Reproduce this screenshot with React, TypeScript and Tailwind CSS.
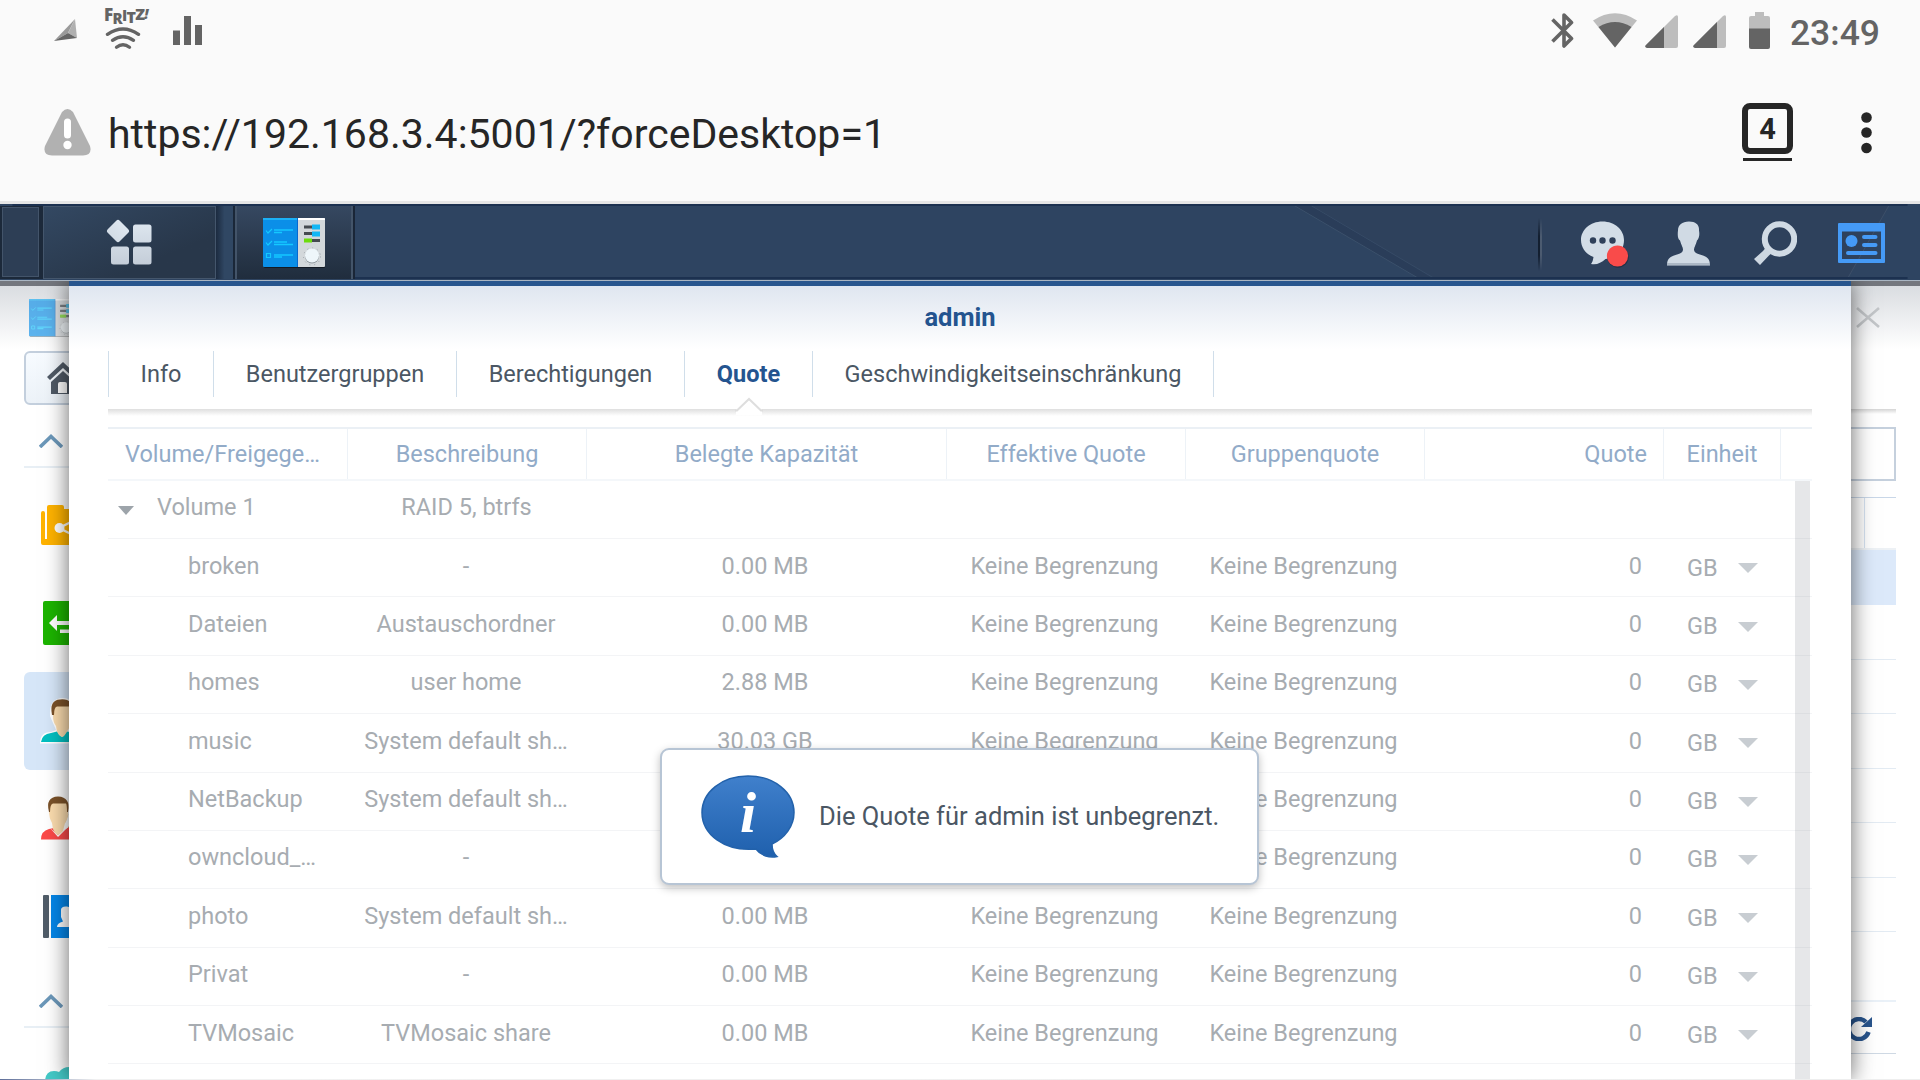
import { ReactNode } from "react";

interface ShareRow {
  name: string;
  description: string;
  used: string;
}

const shares: ShareRow[] = [
  { name: "broken", description: "-", used: "0.00 MB" },
  { name: "Dateien", description: "Austauschordner", used: "0.00 MB" },
  { name: "homes", description: "user home", used: "2.88 MB" },
  { name: "music", description: "System default sh…", used: "30.03 GB" },
  { name: "NetBackup", description: "System default sh…", used: "0.00 MB" },
  { name: "owncloud_…", description: "-", used: "0.00 MB" },
  { name: "photo", description: "System default sh…", used: "0.00 MB" },
  { name: "Privat", description: "-", used: "0.00 MB" },
  { name: "TVMosaic", description: "TVMosaic share", used: "0.00 MB" },
];

const tabs = [
  { label: "Info", width: "w-[105px]" },
  { label: "Benutzergruppen", width: "w-[243px]" },
  { label: "Berechtigungen", width: "w-[228px]" },
  { label: "Quote", width: "w-[128px]", active: true },
  { label: "Geschwindigkeitseinschränkung", width: "w-[401px]" },
];

const columns = "grid grid-cols-[240px_239px_360px_239px_239px_239px_117px_1fr]";

function StatusBar() {
  return (
    <div className="flex h-[64px] items-start justify-between">
      <div className="flex">
        <svg className="ml-[54px] mt-[18px] h-[24px] w-[24px]" viewBox="0 0 24 24">
          <path d="M0 23 21 1 14 15Z" fill="#9a9a9a" />
          <path d="M21 1 23 20 14 15Z" fill="#b0b0b0" />
          <path d="M0 23 14 15 23 20Z" fill="#666" />
        </svg>
        <div className="ml-[26px] mt-[6px] w-[46px]">
          <div className="flex h-[18px] items-start font-['Open_Sans',sans-serif] text-[17px] font-extrabold leading-[18px] tracking-[-0.7px] text-[#646464]">
            <span>F</span>
            <span className="text-[15px] leading-[24px]">R</span>
            <span className="text-[15px]">I</span>
            <span className="text-[16px] leading-[22px]">T</span>
            <span className="text-[16px] leading-[17px]">Z</span>
            <span className="text-[14px] italic leading-[16px]">!</span>
          </div>
          <svg className="ml-[0.5px] mt-[3px] h-[24px] w-[36px]" viewBox="0 0 36 24" fill="none" stroke="#646464" strokeWidth="3.4" strokeLinecap="round">
            <path d="M2.500 7.300Q18 -3.200 33.500 7.300" />
            <path d="M7.500 13.300Q18 6 28.500 13.300" />
            <path d="M11.500 20.300Q18 15 24.500 20.300" />
          </svg>
        </div>
        <svg className="ml-[23px] mt-[16px] h-[29px] w-[30px]" viewBox="0 0 30 29" fill="#646464">
          <path d="M0 14.500h7V29H0zM11 0h7v29h-7zM22 9h7v20h-7z" />
        </svg>
      </div>
      <div className="flex pr-[40px]">
        <svg className="mt-[13px] h-[35px] w-[23px]" viewBox="0 0 23 35" fill="none" stroke="#646464" strokeWidth="3.6" strokeLinejoin="round">
          <path d="M1.500 6.500 20.500 25.500 13 33V2L20.500 9.500 1.500 28.500" />
        </svg>
        <svg className="ml-[19px] mt-[13px] h-[35px] w-[44px]" viewBox="0 0 44 35">
          <path d="M0 7.500Q22-7 44 7.500L22 34.500Z" fill="#bdbdbd" />
          <path d="M5.500 14Q22 4 38.500 14L22 34.500Z" fill="#646464" />
        </svg>
        <svg className="ml-[8px] mt-[15px] h-[33px] w-[33px]" viewBox="0 0 33 33">
          <path d="M1 30 30 1Q33-1 33 2V31Q33 33 31 33H2Q-1 32 1 30Z" fill="#bdbdbd" />
          <path d="M1 30 19 12V33H2Q-1 32 1 30Z" fill="#646464" />
        </svg>
        <svg className="ml-[15px] mt-[15px] h-[33px] w-[33px]" viewBox="0 0 33 33">
          <path d="M1 30 30 1Q33-1 33 2V31Q33 33 31 33H2Q-1 32 1 30Z" fill="#bdbdbd" />
          <path d="M1 30 24 7V33H2Q-1 32 1 30Z" fill="#646464" />
        </svg>
        <svg className="ml-[23px] mt-[12px] h-[37px] w-[21px]" viewBox="0 0 21 37">
          <path d="M6 0h9v4h4q2 0 2 2v11H0V6q0-2 2-2h4z" fill="#bdbdbd" />
          <path d="M0 16.500h21V35q0 2-2 2H2q-2 0-2-2z" fill="#646464" />
        </svg>
        <span className="ml-[20px] mt-[12px] text-[35.5px] font-medium leading-[42px] text-[#646464]">23:49</span>
      </div>
    </div>
  );
}

function AddressBar() {
  return (
    <div className="flex h-[137px] items-start justify-between">
      <div className="flex">
        <svg className="ml-[44px] mt-[45px] h-[47px] w-[47px]" viewBox="0 0 47 47">
          <path d="M18 3Q23.500-3 29 3L46 37Q48.500 46 39 46.500H8Q-1.500 46 1 37Z" fill="#b1b1b1" />
          <rect x="20" y="9.500" width="7" height="20" rx="3.500" fill="#fff" />
          <circle cx="23.500" cy="36" r="4.200" fill="#fff" />
        </svg>
        <span className="ml-[17px] mt-[46px] text-[41px] leading-[48px] text-[#262626]">https://192.168.3.4:5001/?forceDesktop=1</span>
      </div>
      <div className="flex pr-[48px]">
        <div className="mt-[39px] flex flex-col items-center gap-[4px]">
          <div className="flex h-[51px] w-[51px] items-center justify-center rounded-[8px] border-[6px] border-[#262626] pt-[3px] text-[29px] font-bold text-[#262626]">4</div>
          <div className="h-[3px] w-[49px] bg-[#262626]" />
        </div>
        <svg className="ml-[68px] mt-[48px] h-[42px] w-[11px]" viewBox="0 0 11 42" fill="#262626">
          <circle cx="5.500" cy="5.500" r="5.300" />
          <circle cx="5.500" cy="20.500" r="5.300" />
          <circle cx="5.500" cy="36" r="5.300" />
        </svg>
      </div>
    </div>
  );
}

function ControlPanelIcon({ className }: { className: string }) {
  return (
    <svg className={className} viewBox="0 0 62 50">
      <rect x="1" y="2" width="61" height="48" rx="1" fill="#000" opacity=".45" />
      <path d="M0 1q0-1 1-1h34v49H1q-1 0-1-1z" fill="#0b8fe8" />
      <path d="M0 0h35v2H0z" fill="#1bb0f5" />
      <path d="M34 0h1v49h-1z" fill="#0868cf" />
      <path d="M35 0h26q1 0 1 1v47q0 1-1 1H35z" fill="#d3d8db" />
      <path d="M35 0h26q1 0 1 1v1H35z" fill="#fff" />
      <path d="M3 12.500l2 2.500 4-4M3 24.500l2 2.500 4-4M3.500 35.500h4v4h-4z" fill="none" stroke="#14c8ff" strokeWidth="1.200" />
      <path d="M11 12h19M11 14.500h8M11 24h13M11 26.500h19M11 37h19M11 39h8" stroke="#14c8ff" strokeWidth="1.500" />
      <path d="M41 9h16M41 15.500h16M41 22.500h16" stroke="#454b50" strokeWidth="3" />
      <path d="M49 6.500h8v5h-8zM49 13.500h8v5h-8z" fill="#12b7f5" />
      <path d="M41 20.500h8v4h-8z" fill="#6cdc0c" />
      <circle cx="49" cy="38.500" r="8.500" fill="none" stroke="#9aa3aa" strokeWidth="1" strokeDasharray="1 4" />
      <circle cx="49" cy="38.500" r="7" fill="#8f989e" />
      <circle cx="49" cy="37.500" r="7" fill="#eef6fa" />
    </svg>
  );
}

function Taskbar() {
  return (
    <div className="relative flex h-[77px] justify-between overflow-hidden border-b border-b-[#a9b5c2] bg-[#2e4461]">
      <svg className="absolute inset-0 h-full w-full" viewBox="0 0 1920 77">
        <path d="M1296 0H1313L1440 75H1424Z" fill="#2a3d59" />
        <path d="M1296 0 1424 75" stroke="#3b506b" />
        <path d="M1313 0H1902L1859 76H1440Z" fill="#2e415c" />
        <path d="M1313 0 1440 75" stroke="#364a66" />
        <path d="M1902 0 1859 76" stroke="#3d4f69" />
        <path d="M0 1H1920M0 75H1920" stroke="#1c3150" strokeWidth="2" />
      </svg>
      <div className="relative flex pt-[2px] pb-[1px]">
        <div className="w-[43px] border-2 border-t border-r-[4px] border-[#1c293a] bg-[#2d3e55] shadow-[inset_0_0_0_1px_#43546a]" />
        <div className="flex w-[173px] items-center justify-center border border-[#44566c] bg-linear-to-br from-[#334862] to-[#28374a] to-70%">
          <svg className="-mt-[1px] -ml-[1px] h-[46px] w-[46px]" viewBox="0 0 46 46">
            <defs>
              <linearGradient id="tile" x1="0" y1="0" x2="0" y2="46" gradientUnits="userSpaceOnUse">
                <stop stopColor="#dfe8f1" />
                <stop offset="1" stopColor="#c4cdd8" />
              </linearGradient>
            </defs>
            <g fill="url(#tile)">
              <rect x="3.500" y="3.500" width="17" height="17" rx="2.500" transform="rotate(45 12 12)" />
              <rect x="27" y="5.500" width="18.500" height="18" rx="2.500" />
              <rect x="5" y="27.500" width="18" height="18" rx="2.500" />
              <rect x="27" y="27.500" width="18.500" height="18" rx="2.500" />
            </g>
          </svg>
        </div>
        <div className="w-[19px] border-r-2 border-[#1a2738] bg-linear-to-r from-[#1c2b40] to-[#304763] to-50%" />
        <div className="flex w-[118px] items-center justify-center border-x-2 border-[#435469] bg-linear-to-b from-[#364861] to-[#202d3d]">
          <ControlPanelIcon className="h-[50px] w-[62px]" />
        </div>
        <div className="w-[2px] bg-[#1a2637]" />
      </div>
      <div className="relative flex pr-[35px]">
        <div className="mt-[14px] h-[53px] w-[4px] border-r-2 border-[#4c5b70] bg-[#131f30] [mask-image:linear-gradient(transparent,black_35%,black_70%,transparent)]" />
        <svg className="ml-[39px] mt-[17px] h-[48px] w-[48px]" viewBox="0 0 48 48">
          <path d="M21.500.500C9 .500 0 9 0 19c0 8 5 14 12.500 17-.5 3-1 5-2.500 7 6 1 10-1 14.500-5C36 37 43 29 43 19 43 9 34 .500 21.500.500Z" fill="#d3dde7" />
          <g fill="#2f405a">
            <circle cx="12" cy="19.500" r="3.200" />
            <circle cx="21.500" cy="19.500" r="3.200" />
            <circle cx="31.500" cy="19.500" r="3.200" />
          </g>
          <circle cx="37" cy="36" r="10.700" fill="#203047" />
          <circle cx="36.500" cy="35" r="10.600" fill="#f94b4a" />
        </svg>
        <svg className="ml-[38px] mt-[17px] h-[45px] w-[43px]" viewBox="0 0 43 45">
          <path d="M22 .500c7 0 10.500 3.500 10 9 .8 4 .2 8-2 10-1 4-3 7-3 9 0 4 5 4.500 9 6 5 2 7 4 7 10H0c0-6 2-8 7-10 4-1.500 9-2 9-6 0-2-2-5-3-9-2.500-2-2.500-6-2-10C11 4 15 .500 22 .500Z" fill="#d0dae4" />
          <path d="M0 43h43" stroke="#8795a6" />
        </svg>
        <svg className="ml-[44px] mt-[17px] h-[45px] w-[43px]" viewBox="0 0 43 45">
          <circle cx="25.500" cy="18" r="14.700" fill="none" stroke="#d0dae4" strokeWidth="6" />
          <path d="M11.500 27 17 32.500 14.500 35 6 44 0 38 9 30Z" fill="#cdd7e1" />
        </svg>
        <svg className="ml-[41px] mt-[19px] h-[40px] w-[47px]" viewBox="0 0 47 40">
          <path fillRule="evenodd" d="M1 0h45q1 0 1 1v38q0 1-1 1H1q-1 0-1-1V1q0-1 1-1ZM4 8.500V36H43V8.500Z" fill="#459af6" />
          <circle cx="13.500" cy="18" r="6" fill="#459af6" />
          <path d="M26 14h11.500M26 22h11.500M10 30h27.500" stroke="#459af6" strokeWidth="4" strokeLinecap="round" />
        </svg>
      </div>
    </div>
  );
}

function Chevron() {
  return (
    <svg className="ml-[14.5px] h-[14px] w-[24px]" viewBox="0 0 24 14" fill="none" stroke="#6b97b9" strokeWidth="3.600">
      <path d="M1 13 12 2.500 23 13" />
    </svg>
  );
}

function SidebarItem({ children, selected }: { children: ReactNode; selected?: boolean }) {
  return (
    <div className={`flex h-[98px] items-center rounded-l-[6px] pl-[15px] ${selected ? "bg-[#d6e6f8]" : ""}`}>
      {children}
    </div>
  );
}

// Control panel window that sits behind the user dialog
function ControlPanelWindow() {
  return (
    <div className="flex h-full justify-between border-t-[5px] border-[#74777e] bg-linear-to-b from-[#dadde1] to-white to-[63px]">
      <div className="flex w-[100px] flex-col pl-[24px]">
        <ControlPanelIcon className="mt-[13px] ml-[5px] h-[38px] w-[47px] shrink-0 opacity-65" />
        <div className="mt-[14px] flex h-[54px] w-[90px] shrink-0 rounded-[6px] border-2 border-[#c3cfdd] bg-linear-to-b from-[#f7fbff] to-[#ecf2f8]">
          <svg className="ml-[21px] mt-[9px] h-[32px] w-[32px]" viewBox="0 0 32 32" fill="#505a66">
            <path d="M16 0 32 15 29 18 16 6 3 18 0 15Z" />
            <path d="M16 9 28 20V32H4V20Z" />
            <path d="M11 22q0-2 2-2h5q2 0 2 2v9h-9Z" fill="#fff" />
          </svg>
        </div>
        <div className="mt-[29px] h-[34px] shrink-0 border-b-2 border-[#e8eff5]">
          <Chevron />
        </div>
        <div className="mt-[8px] shrink-0">
          <SidebarItem>
            <svg className="ml-[2px] h-[40px] w-[44px]" viewBox="0 0 44 40">
              <path d="M6 2q0-2 2-2h13q2 0 2 2v2h21v36H2q-2 0-2-2V8q0-2 2-2 2 0 2 2v26h2Z" fill="#ffb300" />
              <path d="M18 23 34 15M18 23 34 31" stroke="#fff" strokeWidth="2.500" />
              <circle cx="18.500" cy="23" r="5" fill="#fff" />
            </svg>
          </SidebarItem>
          <SidebarItem>
            <svg className="ml-[4px] h-[44px] w-[44px]" viewBox="0 0 44 44">
              <rect width="44" height="44" rx="2" fill="#1cb400" />
              <path d="M6 22 14 14V20H30V24H14V30Z" fill="#fff" />
              <path d="M17 28.500H34V32H17Z" fill="#fff" />
            </svg>
          </SidebarItem>
          <SidebarItem selected>
            <svg className="ml-[0px] h-[46px] w-[48px]" viewBox="0 0 48 46">
              <path d="M1 45.500Q1 34 12 34L17 32 11 18Q10 0 24 0Q36 0 36 16L31 32 37 34Q47 35 47 45.500Z" fill="#fff" />
              <path d="M2 44Q3 36 12 35L18 33.500 23 39 28 33.500 35 35Q45 36 46 44Z" fill="#02bfc0" />
              <path d="M14 8H33V20Q31 30 28 33.500 25 39 23 39 20 38 18 33.500L17 28Q14 24 14 18Z" fill="#fbdcae" />
              <path d="M13 17Q10 2 21 1.500 34 0 34 14L32 19Q32 10 30 8.500H18Q15 9 15 17Z" fill="#7b5229" />
            </svg>
          </SidebarItem>
          <SidebarItem>
            <svg className="ml-[2px] mt-[-3px] h-[44px] w-[44px]" viewBox="0 0 44 44">
              <circle cx="32" cy="25" r="8" fill="#eac083" />
              <path d="M0 43.500Q0 35 8 33L13 32 23 34 28 31 38 34Q43 36 43 43.500Z" fill="#fb4a49" />
              <path d="M9 32 17 41 28 30 28 17 23 30 17 39Z" fill="#fff" />
              <path d="M8 7H27V17Q27 23 24 27L22 35Q18 39 17 39 14 38 12 33L11 27Q8 22 8 15Z" fill="#fbdcae" />
              <path d="M8 16Q4 1 17 .500 30 1 27 16H26Q26 9 25 7.500H12Q9 8 9 16Z" fill="#7b5229" />
            </svg>
          </SidebarItem>
          <SidebarItem>
            <svg className="ml-[4px] mt-[-1px] h-[43px] w-[44px]" viewBox="0 0 44 43">
              <rect width="6" height="43" rx="1" fill="#505c68" />
              <path d="M8 0H44V43H8Z" fill="#0586e8" />
              <path d="M18 15Q18 11 24 11.500 30 12 29 19L27 25 34 28V32H14Q14 28 20 26.500L18 22Z" fill="#fff" />
            </svg>
          </SidebarItem>
        </div>
        <div className="mt-[28px] h-[34px] shrink-0 border-b-2 border-[#e8eff5]">
          <Chevron />
        </div>
        <svg className="ml-[21px] mt-[39px] h-[13px] w-[40px] shrink-0" viewBox="0 0 40 13">
          <path d="M0 13Q1 4 9 4Q12 4 14 5Q18 0 24 0V13Z" fill="#44c9c7" />
        </svg>
      </div>
      <div className="flex w-[100px] flex-col pr-[24px]">
        <svg className="ml-[36px] mt-[21px] h-[21px] w-[24px] shrink-0" viewBox="0 0 24 21" stroke="#c2c5c8" strokeWidth="2.600">
          <path d="M1 1 23 20M23 1 1 20" />
        </svg>
        <div className="mt-[81px] h-[5px] shrink-0 bg-linear-to-b from-[#d5d5d5] to-white" />
        <div className="mt-[13px] h-[54px] shrink-0 border-2 border-[#c5d0dd] bg-white" />
        <div className="mt-[16px] h-[53px] shrink-0 border-t border-b-2 border-t-[#c9d7e8] border-b-[#edf1f5]">
          <div className="ml-[44px] h-full w-px bg-[#d5e2f1]" />
        </div>
        <div className="h-[55px] shrink-0 bg-[#dce9fa]" />
        <div className="h-[55px] shrink-0 border-b border-[#e3ebf3]" />
        <div className="h-[54px] shrink-0 border-b border-[#e3ebf3]" />
        <div className="h-[55px] shrink-0 border-b border-[#e3ebf3]" />
        <div className="h-[54px] shrink-0 border-b border-[#e3ebf3]" />
        <div className="h-[55px] shrink-0 border-b border-[#e3ebf3]" />
        <div className="h-[54px] shrink-0 border-b border-[#e3ebf3]" />
        <div className="h-[70px] shrink-0 border-b-2 border-[#eaf1f8]" />
        <div className="flex h-[52px] shrink-0 items-center border-b border-[#cfd9e4] pt-[3px]">
          <svg className="ml-[26px] h-[24px] w-[26px]" viewBox="0 0 26 24">
            <path d="M22.500 15A10 10 0 1 1 20 5" fill="none" stroke="#28548c" strokeWidth="4.500" />
            <path d="M26 0V10H15Z" fill="#28548c" />
          </svg>
        </div>
      </div>
    </div>
  );
}

function TabBar() {
  return (
    <div className="flex h-[46px] w-fit border-l border-[#d0deea]">
      {tabs.map((tab) => (
        <div
          key={tab.label}
          className={`relative flex shrink-0 items-center justify-center border-r border-[#d0deea] pt-[2px] text-[23.5px] ${tab.width} ${tab.active ? "font-bold text-[#24548f]" : "text-[#4b5764]"}`}
        >
          {tab.label}
          {tab.active && (
            <svg className="absolute -bottom-[18px] left-1/2 h-[18px] w-[28px] -translate-x-1/2" viewBox="0 0 28 18">
              <path d="M1 13 14 1 27 13V18H1Z" fill="#fff" />
              <path d="M0 13.500H2L14 2 26 13.500H28" fill="none" stroke="#dedede" strokeWidth="2" />
            </svg>
          )}
        </div>
      ))}
    </div>
  );
}

function HeaderCell({ children, className = "" }: { children?: ReactNode; className?: string }) {
  return (
    <div className={`flex items-center justify-center border-r border-[#edf2f7] pt-[2px] ${className}`}>{children}</div>
  );
}

function QuotaTable() {
  return (
    <div className="relative h-[660px] overflow-hidden border-t-2 border-[#ebf0f5] text-[23.5px]">
      <div className={`${columns} h-[52px] border-b-2 border-[#f4f7fa] text-[#92abc8]`}>
        <HeaderCell className="justify-start! pl-[17px]">Volume/Freigege…</HeaderCell>
        <HeaderCell>Beschreibung</HeaderCell>
        <HeaderCell>Belegte Kapazität</HeaderCell>
        <HeaderCell>Effektive Quote</HeaderCell>
        <HeaderCell>Gruppenquote</HeaderCell>
        <HeaderCell className="justify-end! pr-[16px]">Quote</HeaderCell>
        <HeaderCell>Einheit</HeaderCell>
      </div>
      <div className={`${columns} h-[58px] items-center border-b border-[#f3f4f6] pb-[3px] text-[#a7acb1]`}>
        <div className="flex items-center">
          <svg className="ml-[10px] mr-[23px] mt-[4px] h-[9px] w-[16px]" viewBox="0 0 16 9">
            <path d="M0 0H16L8 9Z" fill="#9da4aa" />
          </svg>
          Volume 1
        </div>
        <div className="pr-[2px] text-center">RAID 5, btrfs</div>
      </div>
      {shares.map((share) => (
        <div key={share.name} className={`${columns} h-[58.390px] items-center border-b border-[#f3f4f6] pb-[3px] text-[#a7acb1]`}>
          <div className="pl-[80px]">{share.name}</div>
          <div className="pr-[3px] text-center">{share.description}</div>
          <div className="pr-[4px] text-center">{share.used}</div>
          <div className="pr-[4px] text-center">Keine Begrenzung</div>
          <div className="pr-[4px] text-center">Keine Begrenzung</div>
          <div className="pr-[22px] text-right">0</div>
          <div className="flex items-center pt-[4px] pl-[23px]">
            GB
            <svg className="ml-[20px] h-[10px] w-[20px] shrink-0" viewBox="0 0 20 10">
              <path d="M0 0H20L10 10Z" fill="#c8cdd2" />
            </svg>
          </div>
        </div>
      ))}
      <div className="absolute top-[52px] right-[2px] bottom-0 w-[15px] bg-[#828790]/20" />
    </div>
  );
}

function UserDialog() {
  return (
    <div className="absolute top-0 bottom-0 left-[69px] w-[1782px] border-t-[5px] border-[#28568e] bg-white bg-linear-to-b from-[#dfe6f0] to-white to-[63px] px-[39px] shadow-[0_0_22px_rgba(0,0,0,0.6)]">
      <h1 className="flex h-[65px] items-center justify-center pb-[3px] text-[25.5px] font-bold text-[#24548f]">admin</h1>
      <TabBar />
      <div className="mt-[12px] h-[7px] bg-linear-to-b from-[#dfdfdf] to-white" />
      <div className="mt-[11px]">
        <QuotaTable />
      </div>
    </div>
  );
}

function InfoMessage() {
  return (
    <div className="absolute top-[467px] left-[660px] flex h-[137px] w-[599px] rounded-[9px] border-2 border-[#b7c5d5] bg-white shadow-[0_3px_8px_rgba(0,0,0,0.25)]">
      <svg className="ml-[39px] mt-[25px] h-[83px] w-[94px] shrink-0" viewBox="0 0 94 83">
        <defs>
          <linearGradient id="bubble" x1="0" y1="0" x2="0" y2="1">
            <stop stopColor="#4080cc" />
            <stop offset="1" stopColor="#1f60ad" />
          </linearGradient>
        </defs>
        <path d="M47 1C73 1 93 17 93 37.500 93 51 84 63 71 69 71 74 73 79 76 81.500 69 83 60 81 55 74 23 77 1 59 1 37.500 1 17 21 1 47 1Z" fill="url(#bubble)" stroke="#2362ab" strokeWidth="1.500" />
        <text x="47" y="57" textAnchor="middle" fill="#fff" className="font-['Liberation_Serif',serif] text-[58px] font-bold italic">i</text>
      </svg>
      <span className="ml-[24px] mt-[49px] text-[25.5px] leading-[34px] whitespace-nowrap text-[#4b5764]">Die Quote für admin ist unbegrenzt.</span>
    </div>
  );
}

export default function App() {
  return (
    <div className="flex h-[1080px] w-[1920px] flex-col overflow-hidden bg-[#fafafa] font-[Roboto,sans-serif]">
      <StatusBar />
      <AddressBar />
      <div className="h-[3px] shrink-0 bg-[#e6e6e6]" />
      <Taskbar />
      <div className="relative min-h-0 flex-1 overflow-hidden">
        <ControlPanelWindow />
        <UserDialog />
        <InfoMessage />
        <div className="absolute inset-x-0 bottom-0 h-px bg-linear-to-r from-[#5f6f99] via-[#f1f1f1] via-5% to-[#eeeeee]" />
      </div>
    </div>
  );
}
